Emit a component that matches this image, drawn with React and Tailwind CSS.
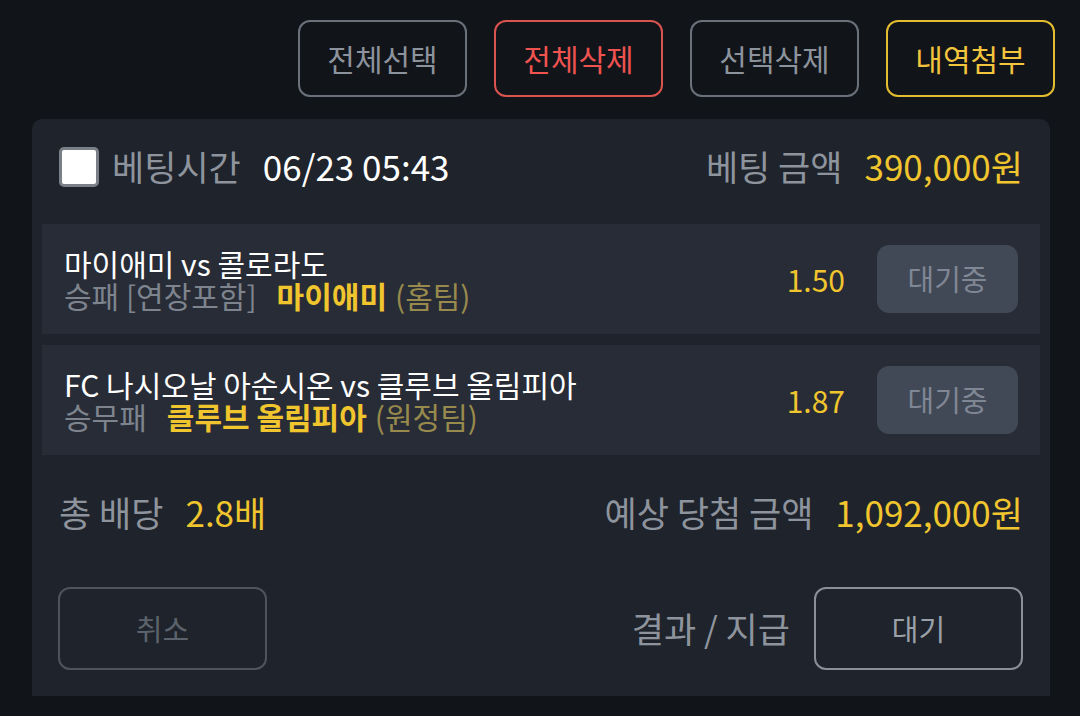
import React from "react";

const font = { fontFamily: '"Noto Sans CJK KR", "Noto Sans", sans-serif' };

const bets = [
  {
    id: 1,
    title: "마이애미 vs 콜로라도",
    market: "승패 [연장포함]",
    pick: "마이애미",
    side: "(홈팀)",
    odds: "1.50",
  },
  {
    id: 2,
    title: "FC 나시오날 아순시온 vs 클루브 올림피아",
    market: "승무패",
    pick: "클루브 올림피아",
    side: "(원정팀)",
    odds: "1.87",
  },
];

function TopButton({ label, tone }) {
  const tones = {
    gray: "border-[#6b717b] text-[#8d939c]",
    red: "border-[#d9534f] text-[#ef5350]",
    yellow: "border-[#e3bd2f] text-[#f2c53d]",
  };
  return (
    <button
      className={`w-[169px] h-[77px] rounded-[12px] border-2 text-[30px] flex items-center justify-center ${tones[tone]}`}
    >
      {label}
    </button>
  );
}

export default function App() {
  return (
    <div
      className="w-[1080px] h-[716px] overflow-hidden bg-[#111419] flex flex-col"
      style={font}
    >
      <div className="flex justify-end gap-[27px] pt-[20px] pr-[25px]">
        <TopButton label="전체선택" tone="gray" />
        <TopButton label="전체삭제" tone="red" />
        <TopButton label="선택삭제" tone="gray" />
        <TopButton label="내역첨부" tone="yellow" />
      </div>

      <div className="ml-[32px] mt-[22px] w-[1018px] h-[577px] rounded-t-[10px] bg-[#1f232b] px-[10px] flex flex-col">
        {/* header */}
        <div className="h-[105px] pb-[10px] flex items-center justify-between pl-[17px] pr-[17px]">
          <div className="flex items-center">
            <div className="w-[40px] h-[40px] rounded-[5px] bg-white border-[3px] border-[#7a7f88]" />
            <span className="ml-[13px] text-[35px] text-[#8e949d]">베팅시간</span>
            <span className="ml-[22px] text-[35px] text-white">06/23 05:43</span>
          </div>
          <div className="flex items-center">
            <span className="text-[35px] text-[#8e949d]">베팅 금액</span>
            <span className="ml-[22px] text-[35px] text-[#f0c52e]">390,000원</span>
          </div>
        </div>

        {/* bet rows */}
        <div className="flex flex-col gap-[11px]">
          {bets.map((bet) => (
            <div
              key={bet.id}
              className="h-[110px] bg-[#272c36] flex items-center justify-between pl-[22px] pr-[22px]"
            >
              <div className="flex flex-col leading-[32px]">
                <span className="text-[30px] text-white">{bet.title}</span>
                <div className="flex items-center text-[30px]">
                  <span className="text-[#7e848e]">{bet.market}</span>
                  <span className="ml-[20px] font-bold text-[#f0c52e]">{bet.pick}</span>
                  <span className="ml-[8px] text-[#978a4c]">{bet.side}</span>
                </div>
              </div>
              <div className="flex items-center">
                <span className="text-[30px] text-[#f0c52e]">{bet.odds}</span>
                <button className="ml-[32px] w-[141px] h-[68px] rounded-[12px] bg-[#414856] text-[29px] text-[#7f8694]">
                  대기중
                </button>
              </div>
            </div>
          ))}
        </div>

        {/* totals */}
        <div className="h-[115px] flex items-center justify-between pl-[17px] pr-[17px]">
          <div className="flex items-center">
            <span className="text-[35px] text-[#8e949d]">총 배당</span>
            <span className="ml-[22px] text-[35px] text-[#f0c52e]">2.8배</span>
          </div>
          <div className="flex items-center">
            <span className="text-[35px] text-[#8e949d]">예상 당첨 금액</span>
            <span className="ml-[22px] text-[35px] text-[#f0c52e]">1,092,000원</span>
          </div>
        </div>

        {/* bottom actions */}
        <div className="flex items-center justify-between pl-[16px] pr-[17px] pt-[17px]">
          <button className="w-[209px] h-[83px] rounded-[12px] border-2 border-[#4f545c] text-[29px] text-[#5c626c]">
            취소
          </button>
          <div className="flex items-center">
            <span className="text-[35px] text-[#8e949d]">결과 / 지급</span>
            <button className="ml-[24px] w-[209px] h-[83px] rounded-[12px] border-2 border-[#8a9099] text-[29px] text-[#9aa0a8]">
              대기
            </button>
          </div>
        </div>
      </div>
    </div>
  );
}
